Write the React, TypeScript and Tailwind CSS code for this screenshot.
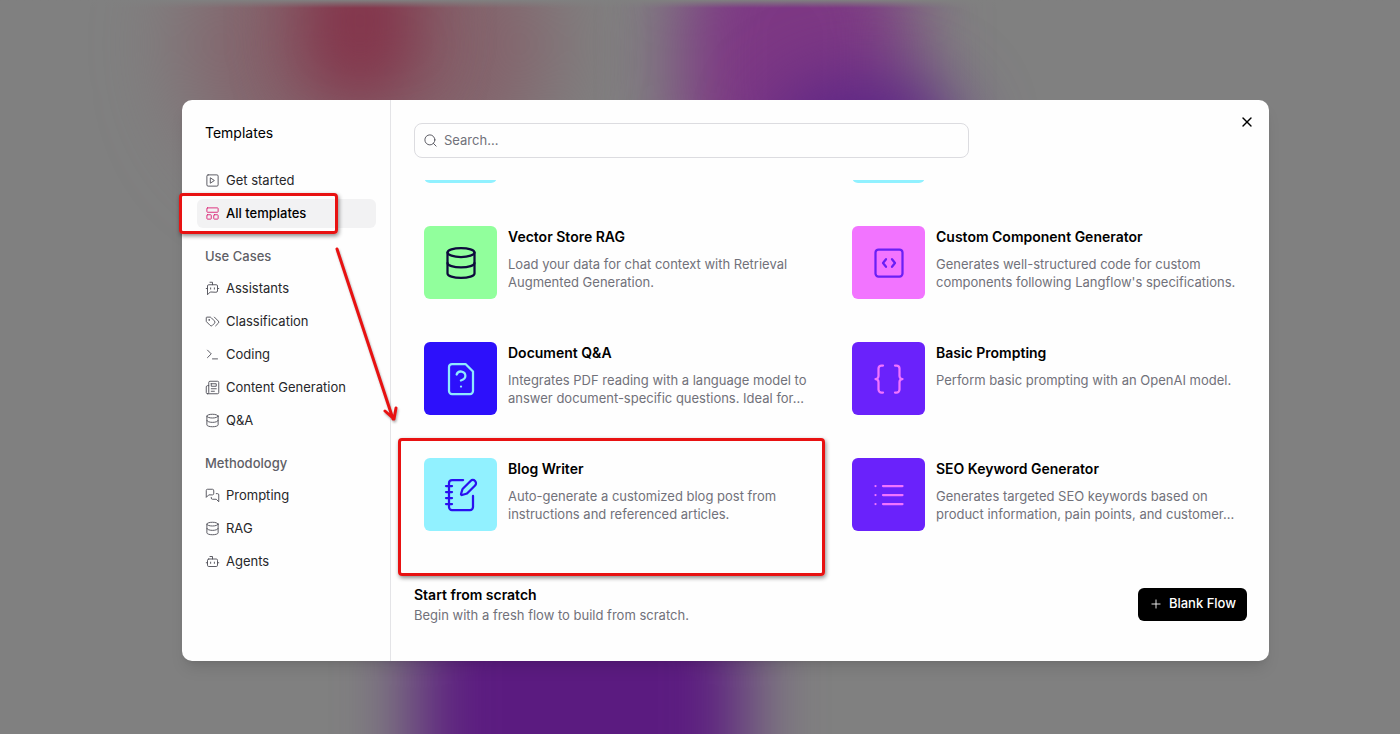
import type { ReactNode } from "react";
import { Bot, Braces, Database, LayoutPanelTop, NotebookPen, Plus, Search, X } from "lucide-react";

type IconProps = { size?: number; strokeWidth?: number; className?: string };

function Svg({ size = 24, strokeWidth = 2, className, children }: IconProps & { children: ReactNode }) {
    return (
        <svg
            width={size}
            height={size}
            viewBox="0 0 24 24"
            fill="none"
            stroke="currentColor"
            strokeWidth={strokeWidth}
            strokeLinecap="round"
            strokeLinejoin="round"
            className={className}
            aria-hidden="true"
        >
            {children}
        </svg>
    );
}

const SquarePlay = (props: IconProps) => (
    <Svg {...props}>
        <rect width="18" height="18" x="3" y="3" rx="2" />
        <path d="m9 8 6 4-6 4Z" />
    </Svg>
);

const BotMessage = (props: IconProps) => (
    <Svg {...props}>
        <path d="M12 6V2H8" />
        <path d="m8 18-4 4V8a2 2 0 0 1 2-2h12a2 2 0 0 1 2 2v8a2 2 0 0 1-2 2Z" />
        <path d="M2 12h2M9 11v2M15 11v2M20 12h2" />
    </Svg>
);

const Tags = (props: IconProps) => (
    <Svg {...props}>
        <path d="m15 5 6.3 6.3a2.4 2.4 0 0 1 0 3.4L17 19" />
        <path d="M9.586 5.586A2 2 0 0 0 8.172 5H3a1 1 0 0 0-1 1v5.172a2 2 0 0 0 .586 1.414L8.29 18.29a2.426 2.426 0 0 0 3.42 0l3.58-3.58a2.426 2.426 0 0 0 0-3.42z" />
        <circle cx="6.5" cy="9.5" r=".5" fill="currentColor" />
    </Svg>
);

const Terminal = (props: IconProps) => (
    <Svg {...props}>
        <path d="m4 17 6-6-6-6M12 19h8" />
    </Svg>
);

const Newspaper = (props: IconProps) => (
    <Svg {...props}>
        <path d="M4 22h16a2 2 0 0 0 2-2V4a2 2 0 0 0-2-2H8a2 2 0 0 0-2 2v16a2 2 0 0 1-2 2Zm0 0a2 2 0 0 1-2-2v-9c0-1.1.9-2 2-2h2" />
        <path d="M18 14h-8M15 18h-5M10 6h8v4h-8V6Z" />
    </Svg>
);

const Messages = (props: IconProps) => (
    <Svg {...props}>
        <path d="M14 9a2 2 0 0 1-2 2H6l-4 4V4a2 2 0 0 1 2-2h8a2 2 0 0 1 2 2z" />
        <path d="M18 9h2a2 2 0 0 1 2 2v11l-4-4h-6a2 2 0 0 1-2-2v-1" />
    </Svg>
);

const SquareCode = (props: IconProps) => (
    <Svg {...props}>
        <rect width="18" height="18" x="3" y="3" rx="2" />
        <path d="M10 9.5 8 12l2 2.5M14 9.5l2 2.5-2 2.5" />
    </Svg>
);

const FileQuestion = (props: IconProps) => (
    <Svg {...props}>
        <path d="M12 17h.01" />
        <path d="M15 2H6a2 2 0 0 0-2 2v16a2 2 0 0 0 2 2h12a2 2 0 0 0 2-2V7z" />
        <path d="M9.1 9a3 3 0 0 1 5.82 1c0 2-3 3-3 3" />
    </Svg>
);

const List = (props: IconProps) => (
    <Svg {...props}>
        <path d="M8 6h13M8 12h13M8 18h13M3 6h.01M3 12h.01M3 18h.01" />
    </Svg>
);

const navGroups = [
    {
        title: "",
        items: [
            { label: "Get started", Icon: SquarePlay },
            { label: "All templates", Icon: LayoutPanelTop, active: true },
        ],
    },
    {
        title: "Use Cases",
        items: [
            { label: "Assistants", Icon: BotMessage },
            { label: "Classification", Icon: Tags },
            { label: "Coding", Icon: Terminal },
            { label: "Content Generation", Icon: Newspaper },
            { label: "Q&A", Icon: Database },
        ],
    },
    {
        title: "Methodology",
        items: [
            { label: "Prompting", Icon: Messages },
            { label: "RAG", Icon: Database },
            { label: "Agents", Icon: Bot },
        ],
    },
];

const templates = [
    {
        title: "Vector Store RAG",
        description: "Load your data for chat context with Retrieval Augmented Generation.",
        Icon: Database,
        tile: "bg-[#91ff9c] text-[#0d0a3c]",
    },
    {
        title: "Custom Component Generator",
        description: "Generates well-structured code for custom components following Langflow's specifications.",
        Icon: SquareCode,
        tile: "bg-[#f274ff] text-[#6a1ff5]",
    },
    {
        title: "Document Q&A",
        description: "Integrates PDF reading with a language model to answer document-specific questions. Ideal for...",
        Icon: FileQuestion,
        tile: "bg-[#2d10fb] text-[#8fe9ff]",
    },
    {
        title: "Basic Prompting",
        description: "Perform basic prompting with an OpenAI model.",
        Icon: Braces,
        tile: "bg-[#6a22fb] text-[#f274ff]",
    },
    {
        title: "Blog Writer",
        description: "Auto-generate a customized blog post from instructions and referenced articles.",
        Icon: NotebookPen,
        tile: "bg-[#91f1ff] text-[#2a10f0]",
    },
    {
        title: "SEO Keyword Generator",
        description: "Generates targeted SEO keywords based on product information, pain points, and customer...",
        Icon: List,
        tile: "bg-[#6a22fb] text-[#f274ff]",
    },
];

function Backdrop() {
    return (
        <div className="absolute inset-0 overflow-hidden bg-[#808080]" aria-hidden="true">
            <div className="absolute -top-24 left-[190px] h-[280px] w-[360px] rounded-full bg-[#84616a] blur-[44px]" />
            <div className="absolute -top-16 left-[300px] h-[170px] w-[120px] rounded-full bg-[#84364c] blur-[32px]" />
            <div className="absolute -top-24 left-[680px] h-[320px] w-[230px] rounded-full bg-[#7d3884] blur-[36px]" />
            <div className="absolute top-[80px] left-[770px] h-[140px] w-[190px] rounded-full bg-[#5a2486] blur-[36px]" />
            <div className="absolute top-[560px] left-[415px] h-[320px] w-[330px] rounded-[80px] bg-[#5b1b80] blur-[36px]" />
            <div className="absolute inset-x-0 top-0 h-2 bg-linear-to-b from-[#808080] to-transparent" />
        </div>
    );
}

function Sidebar() {
    return (
        <aside className="w-[209px] shrink-0 border-r border-[#e4e4e7] pt-[22px] pr-[14px] pl-[15px]">
            <h1 className="px-2 text-sm leading-[22px]">Templates</h1>
            <nav className="mt-[22px] flex flex-col gap-[14px]">
                {navGroups.map((group) => (
                    <div key={group.title} className="flex flex-col gap-1">
                        {group.title && (
                            <h2 className="px-2 text-[13px] leading-7 font-medium text-[#5f5f66]">{group.title}</h2>
                        )}
                        {group.items.map(({ label, Icon, ...item }) => {
                            const active = "active" in item;
                            return (
                                <button
                                    key={label}
                                    type="button"
                                    className={`flex h-[29px] items-center gap-1.5 rounded-md px-2 text-left text-[13px] ${
                                        active ? "bg-[#f2f2f3] font-medium text-black" : "text-[#27272a]"
                                    }`}
                                >
                                    <Icon
                                        size={15}
                                        strokeWidth={1.5}
                                        className={active ? "text-[#db2777]" : "text-[#52525b]"}
                                    />
                                    {label}
                                </button>
                            );
                        })}
                    </div>
                ))}
            </nav>
        </aside>
    );
}

function TemplateCard({ title, description, Icon, tile }: (typeof templates)[number]) {
    return (
        <article className="flex h-[116px] items-start gap-[11px] px-[10px]">
            <div className={`flex size-[73px] shrink-0 items-center justify-center rounded-md ${tile}`}>
                <Icon size={36} strokeWidth={1.5} />
            </div>
            <div className="min-w-0">
                <h3 className="text-sm leading-[22px] font-semibold text-black">{title}</h3>
                <p className="mt-[7px] line-clamp-2 text-[13px] leading-[18px] text-[#71717a]">{description}</p>
            </div>
        </article>
    );
}

function Annotations() {
    return (
        <div className="pointer-events-none" aria-hidden="true">
            <div className="absolute top-[93px] -left-[3px] h-[41px] w-[159px] rounded-[4px] border-[3px] border-[#e81212] shadow-[1px_2px_4px_rgba(0,0,0,0.45)]" />
            <div className="absolute top-[338px] left-[216px] h-[138px] w-[427px] rounded-[4px] border-[3px] border-[#e81212] shadow-[1px_2px_4px_rgba(0,0,0,0.45)]" />
            <svg
                className="absolute top-[140px] left-[148px] drop-shadow-[1px_2px_1px_rgba(0,0,0,0.3)]"
                width="76"
                height="190"
                viewBox="0 0 76 190"
                fill="none"
                stroke="#e81212"
                strokeWidth="3"
                strokeLinecap="round"
                strokeLinejoin="round"
            >
                <path d="M7 9 63 179M55 171l9 8 2-11" />
            </svg>
        </div>
    );
}

export default function App() {
    return (
        <div className="relative min-h-screen pt-[100px] pr-[131px] pb-[73px] pl-[182px] font-[Inter,sans-serif] text-black">
            <Backdrop />
            <div className="relative">
                <div role="dialog" aria-label="Templates" className="relative flex rounded-[10px] bg-[#fefefe] shadow-lg">
                    <Sidebar />
                    <main className="min-w-0 flex-1 pt-[23px] pr-[22px] pb-[37px] pl-[23px]">
                        <label className="flex h-[35px] w-2/3 items-center gap-1.5 rounded-lg border border-[#dcdce0] px-2">
                            <Search size={15} strokeWidth={1.5} className="text-[#52525b]" />
                            <input
                                type="text"
                                aria-label="Search templates"
                                placeholder="Search..."
                                className="min-w-0 flex-1 bg-transparent text-[13px] outline-none placeholder:text-[#71717a]"
                            />
                        </label>
                        {/* Bottom edge of the row that is scrolled out of view */}
                        <div className="mt-[22px] grid grid-cols-2 gap-x-[23px]">
                            <div className="flex h-[3px] items-end overflow-hidden px-[10px]">
                                <div className="size-[73px] shrink-0 rounded-md bg-[#91f1ff]" />
                            </div>
                            <div className="flex h-[3px] items-end overflow-hidden px-[10px]">
                                <div className="size-[73px] shrink-0 rounded-md bg-[#91f1ff]" />
                            </div>
                        </div>
                        <div className="mt-[43px] grid grid-cols-2 gap-x-[23px]">
                            {templates.map((template) => (
                                <TemplateCard key={template.title} {...template} />
                            ))}
                        </div>
                        <footer className="mt-[10px] flex items-center justify-between">
                            <div>
                                <h3 className="text-sm leading-[22px] font-semibold">Start from scratch</h3>
                                <p className="text-[13px] leading-[18px] text-[#71717a]">
                                    Begin with a fresh flow to build from scratch.
                                </p>
                            </div>
                            <button
                                type="button"
                                className="flex h-[33px] items-center gap-1.5 rounded-md bg-black px-[11px] text-[13px] font-medium text-white"
                            >
                                <Plus size={14} strokeWidth={1.5} />
                                Blank Flow
                            </button>
                        </footer>
                    </main>
                    <button type="button" aria-label="Close" className="absolute top-[14px] right-[14px]">
                        <X size={16} strokeWidth={2} />
                    </button>
                </div>
                <Annotations />
            </div>
        </div>
    );
}
